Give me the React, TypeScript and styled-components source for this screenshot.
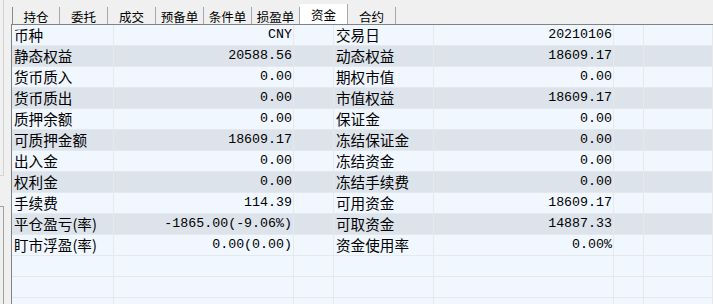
import React from "react";
import styled, { createGlobalStyle } from "styled-components";

const Global = createGlobalStyle`
  html, body { margin: 0; padding: 0; background: #f0f0f0; overflow: hidden; }
  * { box-sizing: border-box; }
`;

const Page = styled.div`
  display: flex;
  width: 713px;
  height: 304px;
  overflow: hidden;
  background: #f0f0f0;
`;

const LeftStrip = styled.div`
  width: 11px;
  flex: none;
  display: flex;
  flex-direction: column;
`;

const UpperEdge = styled.div`
  width: 4px;
  height: 176px;
  border-right: 1px solid #d4d4d4;
  border-bottom: 1px solid #d4d4d4;
`;

const LowerEdge = styled.div`
  margin-top: 30px;
  width: 4px;
  flex: 1;
  border-top: 1px solid #a0a0a0;
  border-right: 1px solid #a0a0a0;
`;

const Main = styled.div`
  flex: 1;
  display: flex;
  flex-direction: column;
  min-width: 0;
`;

const TabBar = styled.div`
  height: 24px;
  display: flex;
  align-items: flex-end;
  padding-left: 1px;
  flex: none;
`;

const Tab = styled.div<{ $active?: boolean; $first?: boolean }>`
  width: 48px;
  height: ${(p) => (p.$active ? 20 : 17)}px;
  display: flex;
  align-items: center;
  justify-content: center;
  font-family: "Noto Sans CJK SC", sans-serif;
  font-size: 12.5px;
  color: #000;
  background: ${(p) => (p.$active ? "#ffffff" : "#f0f0f0")};
  border-right: 1px solid #a8a8a8;
  border-left: ${(p) => (p.$first ? "1px solid #8a8a8a" : "none")};
  padding-top: ${(p) => (p.$active ? 0 : 1)}px;
`;

const Table = styled.div`
  flex: 1;
  border-top: 1px solid #828282;
  border-left: 1px solid #828282;
  background: #f0f7ff;
  overflow: hidden;
`;

const Row = styled.div<{ $band: boolean }>`
  display: grid;
  grid-template-columns: 102px 180px 40px 100px 180px 30px 1fr;
  height: 21px;
  background: ${(p) => (p.$band ? "#dce3ea" : "#f0f7ff")};
  border-bottom: 1px solid #e6e9ec;
`;

const Cell = styled.div<{ $align?: "left" | "right" }>`
  border-right: 1px solid #e6e9ec;
  display: flex;
  align-items: center;
  justify-content: ${(p) => (p.$align === "right" ? "flex-end" : "flex-start")};
  padding: ${(p) => (p.$align === "right" ? "0 1px 0 0" : "0 0 0 2px")};
  white-space: nowrap;
  overflow: hidden;
  color: #000;
`;

const Label = styled.span`
  font-family: "Noto Sans CJK SC", sans-serif;
  font-size: 14.6px;
  line-height: 20px;
`;

const Value = styled.span`
  font-family: "Liberation Mono", monospace;
  font-size: 13.3px;
  line-height: 20px;
`;

const tabs = ["持仓", "委托", "成交", "预备单", "条件单", "损盈单", "资金", "合约"];

const rows: [string, string, string, string][] = [
  ["币种", "CNY", "交易日", "20210106"],
  ["静态权益", "20588.56", "动态权益", "18609.17"],
  ["货币质入", "0.00", "期权市值", "0.00"],
  ["货币质出", "0.00", "市值权益", "18609.17"],
  ["质押余额", "0.00", "保证金", "0.00"],
  ["可质押金额", "18609.17", "冻结保证金", "0.00"],
  ["出入金", "0.00", "冻结资金", "0.00"],
  ["权利金", "0.00", "冻结手续费", "0.00"],
  ["手续费", "114.39", "可用资金", "18609.17"],
  ["平仓盈亏(率)", "-1865.00(-9.06%)", "可取资金", "14887.33"],
  ["盯市浮盈(率)", "0.00(0.00)", "资金使用率", "0.00%"],
];

export default function App() {
  const empty = [0, 1, 2];
  return (
    <>
      <Global />
      <Page>
        <LeftStrip>
          <UpperEdge />
          <LowerEdge />
        </LeftStrip>
        <Main>
          <TabBar>
            {tabs.map((t, i) => (
              <Tab key={t} $first={i === 0} $active={t === "资金"}>
                {t}
              </Tab>
            ))}
          </TabBar>
          <Table>
            {rows.map((r, i) => (
              <Row key={r[0]} $band={i % 2 === 1}>
                <Cell><Label>{r[0]}</Label></Cell>
                <Cell $align="right"><Value>{r[1]}</Value></Cell>
                <Cell />
                <Cell><Label>{r[2]}</Label></Cell>
                <Cell $align="right"><Value>{r[3]}</Value></Cell>
                <Cell />
                <Cell />
              </Row>
            ))}
            {empty.map((k) => (
              <Row key={"e" + k} $band={false}>
                <Cell /><Cell /><Cell /><Cell /><Cell /><Cell /><Cell />
              </Row>
            ))}
          </Table>
        </Main>
      </Page>
    </>
  );
}
